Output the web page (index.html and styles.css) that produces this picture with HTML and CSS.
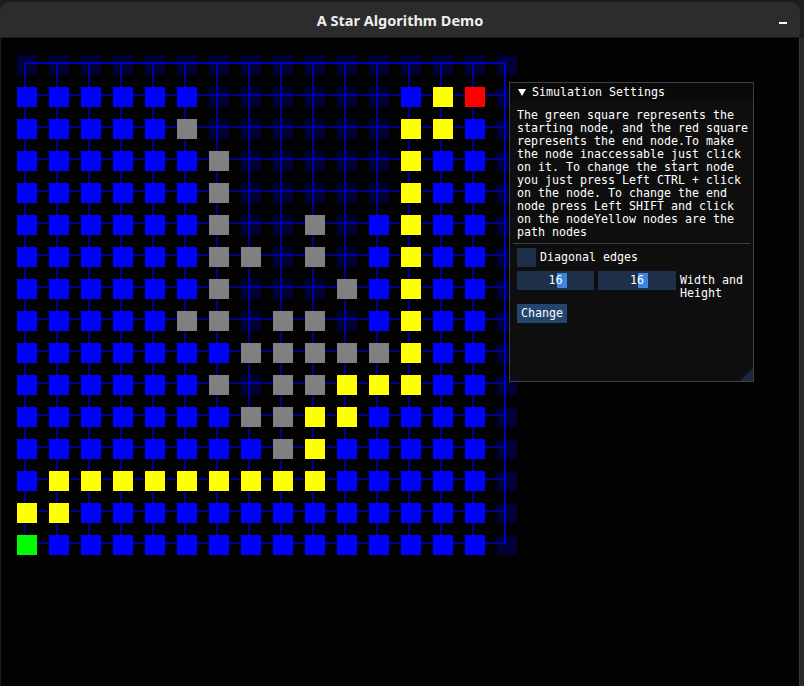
FILE: index.html
```
<!DOCTYPE html>
<html lang="en">
<head>
<meta charset="utf-8">
<title>A Star Algorithm Demo</title>
<link rel="stylesheet" href="styles.css">
</head>
<body>
<div class="window">
  <header class="titlebar">
    <span class="title">A Star Algorithm Demo</span>
    <span class="minimize"></span>
  </header>
  <main class="canvas">
    <div class="board">
      <svg class="edges" id="edges" width="500" height="500" viewBox="0 0 500 500"></svg>
      <div class="nodes" id="nodes"></div>
    </div>
    <section class="imgui">
      <div class="imgui-title"><span class="arrow"></span><span>Simulation Settings</span></div>
      <div class="imgui-body">
        <p class="wrap">The green square represents the<br>starting node, and the red square<br>represents the end node.To make<br>the node inaccessable just click<br>on it. To change the start node<br>you just press Left CTRL + click<br>on the node. To change the end<br>node press Left SHIFT and click<br>on the nodeYellow nodes are the<br>path nodes</p>
        <div class="separator"></div>
        <label class="check"><span class="box"></span><span>Diagonal edges</span></label>
        <div class="sliders">
          <div class="slider s1"><span class="grab"></span><span class="val">16</span></div>
          <div class="slider s2"><span class="grab"></span><span class="val">16</span></div>
          <span class="slabel">Width and<br>Height</span>
        </div>
        <button class="btn">Change</button>
      </div>
      <span class="grip"></span>
    </section>
  </main>
</div>
<script src="script.js"></script>
</body>
</html>
```
FILE: styles.css
```
* { box-sizing: border-box; }
html, body { margin: 0; padding: 0; }
body {
  width: 804px;
  height: 686px;
  background: linear-gradient(#1c1d20 0, #1c1d20 38px, #282828 38px);
  overflow: hidden;
  font-family: "DejaVu Sans Mono", monospace;
}
.window {
  margin-top: 2px;
  width: 800px;
  height: 684px;
  display: flex;
  flex-direction: column;
}
.titlebar {
  height: 36px;
  flex: none;
  background: #2c2c2c;
  border-radius: 10px 10px 0 0;
  border-bottom: 1px solid #1a1a1a;
  display: flex;
  align-items: center;
  justify-content: center;
  position: relative;
}
.title {
  font-family: "Noto Sans", "Open Sans", sans-serif;
  font-weight: 700;
  font-size: 14.5px;
  color: #eeeeee;
  margin-top: 1px;
}
.minimize {
  position: absolute;
  right: 13px;
  top: 20px;
  width: 8px;
  height: 2px;
  background: #ffffff;
}
.canvas {
  flex: 1;
  background: #020202;
  border-left: 1px solid #1e1e1e;
  border-right: 1px solid #363636;
  padding: 17px 16px;
  position: relative;
}
.board {
  position: relative;
  width: 500px;
  height: 500px;
}
.edges {
  position: absolute;
  left: 0;
  top: 0;
}
.nodes {
  position: relative;
  display: grid;
  grid-template-columns: repeat(16, 20px);
  grid-auto-rows: 20px;
  gap: 12px;
}
.nodes i { display: block; }
.nodes .b { background: #0000ff; }
.nodes .d { background: rgba(0, 0, 255, 0.22); }
.nodes .g { background: #808080; }
.nodes .y { background: #ffff00; }
.nodes .r { background: #ff0000; }
.nodes .s { background: #00ff00; }

.imgui {
  position: absolute;
  left: 508px;
  top: 44px;
  width: 245px;
  height: 300px;
  background: rgba(15, 15, 15, 0.94);
  border: 1px solid rgba(110, 110, 128, 0.5);
  color: #ffffff;
  font-size: 11.63px;
  line-height: 13px;
}
.imgui-title {
  height: 19px;
  background: #0a0a0a;
  display: flex;
  align-items: center;
  padding-left: 8px;
  gap: 6px;
}
.arrow {
  width: 0;
  height: 0;
  border-left: 4px solid transparent;
  border-right: 4px solid transparent;
  border-top: 7px solid #ffffff;
}
.imgui-body {
  padding: 7px 7px 0 7px;
  display: flex;
  flex-direction: column;
  align-items: flex-start;
}
.wrap { margin: 0; white-space: nowrap; }
.separator {
  align-self: stretch;
  margin: 4px -4px 4px -4px;
  height: 1px;
  background: rgba(110, 110, 128, 0.5);
}
.check {
  display: flex;
  align-items: center;
  gap: 4px;
}
.box {
  width: 19px;
  height: 19px;
  background: #1d2f49;
}
.sliders {
  margin-top: 4px;
  display: flex;
  align-items: flex-start;
  gap: 4px;
}
.slider {
  position: relative;
  height: 19px;
  background: #1d2f49;
  display: flex;
  align-items: center;
  justify-content: center;
}
.s1 { width: 77px; }
.s2 { width: 78px; }
.grab {
  position: absolute;
  top: 2px;
  width: 10px;
  height: 15px;
  background: #3d85e0;
}
.s1 .grab { left: 40px; }
.s2 .grab { left: 40px; }
.val { position: relative; }
.slabel { padding-top: 3px; white-space: nowrap; }
.btn {
  margin-top: 4px;
  height: 19px;
  padding: 0 4px;
  border: 0;
  background: #24456d;
  color: #ffffff;
  font: inherit;
  line-height: 19px;
}
.grip {
  position: absolute;
  right: 0;
  bottom: 0;
  width: 13px;
  height: 13px;
  background: #1a2a3e;
  clip-path: polygon(100% 0, 100% 100%, 0 100%);
}
```
FILE: script.js
```
(function () {
  var map = [
    "dddddddddddddddd",
    "bbbbbbddddddbyrd",
    "bbbbbgddddddyybd",
    "bbbbbbgdddddybbd",
    "bbbbbbgdddddybbd",
    "bbbbbbgddgdbybbd",
    "bbbbbbggdgdbybbd",
    "bbbbbbgdddgbybbd",
    "bbbbbggdggdbybbd",
    "bbbbbbbgggggybbd",
    "bbbbbbgdggyyybbd",
    "bbbbbbbggyybbbbd",
    "bbbbbbbbgybbbbbd",
    "byyyyyyyyybbbbbd",
    "yybbbbbbbbbbbbbd",
    "sbbbbbbbbbbbbbbd"
  ];
  var nodes = document.getElementById('nodes');
  var html = '';
  for (var r = 0; r < 16; r++) {
    for (var c = 0; c < 16; c++) {
      html += '<i class="' + map[r][c] + '"></i>';
    }
  }
  nodes.innerHTML = html;

  var normal = '#000088', frame = '#0000b4';
  var lines = '';
  for (var k = 0; k < 16; k++) {
    var p = 8 + 32 * k;
    lines += '<line x1="8" y1="' + p + '" x2="488" y2="' + p + '" stroke="' + (k === 0 ? frame : normal) + '"/>';
    lines += '<line x1="' + p + '" y1="8" x2="' + p + '" y2="488" stroke="' + (k === 15 ? frame : normal) + '"/>';
  }
  document.getElementById('edges').innerHTML = '<g stroke-width="2">' + lines + '</g>';
})();
```
